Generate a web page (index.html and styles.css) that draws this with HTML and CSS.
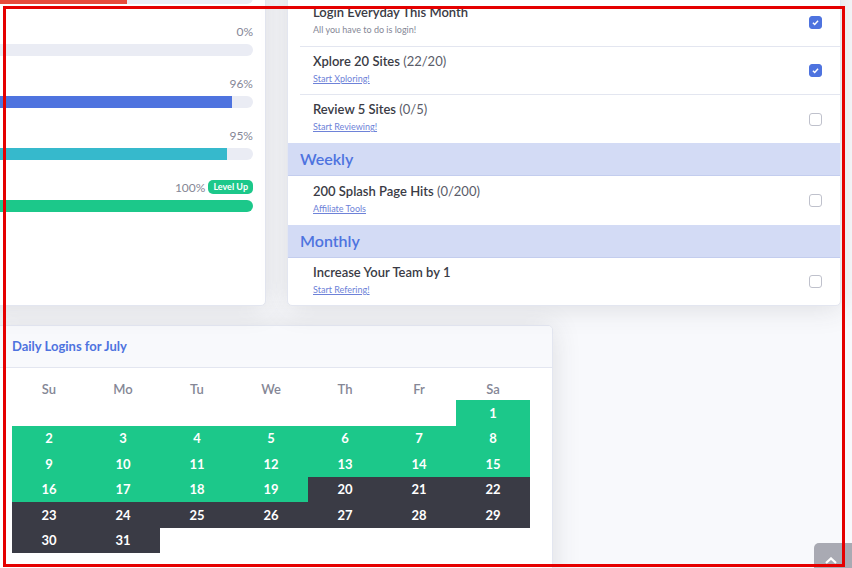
FILE: index.html
```html
<!DOCTYPE html>
<html lang="en">
<head>
    <meta charset="UTF-8">
    <meta name="viewport" content="width=device-width, initial-scale=1.0">
    <title>Dashboard Goals</title>
    <link rel="stylesheet" href="styles.css">
</head>
<body>

<div class="page">
    <div class="top-row">
        <div class="card goals">
            <div class="goal">
                <div class="goal-label">76%</div>
                <div class="bar"><div class="fill fill-red" style="width:76%"></div></div>
            </div>
            <div class="goal">
                <div class="goal-label">0%</div>
                <div class="bar"><div class="fill fill-blue" style="width:0%"></div></div>
            </div>
            <div class="goal">
                <div class="goal-label">96%</div>
                <div class="bar"><div class="fill fill-blue" style="width:96%"></div></div>
            </div>
            <div class="goal">
                <div class="goal-label">95%</div>
                <div class="bar"><div class="fill fill-teal" style="width:95%"></div></div>
            </div>
            <div class="goal">
                <div class="goal-label">100% <span class="badge">Level Up</span></div>
                <div class="bar"><div class="fill fill-green" style="width:100%"></div></div>
            </div>
        </div>

        <div class="card tasks">
            <div class="group-head">Daily</div>
            <div class="task">
                <div class="task-text">
                    <div class="task-title">Login Everyday This Month</div>
                    <div class="task-note">All you have to do is login!</div>
                </div>
                <span class="check checked"><svg viewBox="0 0 12 12"><path d="M3.2 6.2l1.9 1.9 3.7-4"/></svg></span>
            </div>
            <div class="task">
                <div class="task-text">
                    <div class="task-title">Xplore 20 Sites <span class="count">(22/20)</span></div>
                    <a class="task-link" href="#">Start Xploring!</a>
                </div>
                <span class="check checked"><svg viewBox="0 0 12 12"><path d="M3.2 6.2l1.9 1.9 3.7-4"/></svg></span>
            </div>
            <div class="task">
                <div class="task-text">
                    <div class="task-title">Review 5 Sites <span class="count">(0/5)</span></div>
                    <a class="task-link" href="#">Start Reviewing!</a>
                </div>
                <span class="check"></span>
            </div>

            <div class="group-head">Weekly</div>
            <div class="task">
                <div class="task-text">
                    <div class="task-title">200 Splash Page Hits <span class="count">(0/200)</span></div>
                    <a class="task-link" href="#">Affiliate Tools</a>
                </div>
                <span class="check"></span>
            </div>

            <div class="group-head">Monthly</div>
            <div class="task">
                <div class="task-text">
                    <div class="task-title">Increase Your Team by 1</div>
                    <a class="task-link" href="#">Start Refering!</a>
                </div>
                <span class="check"></span>
            </div>
        </div>
    </div>

    <div class="bottom-row">
        <div class="card calendar">
            <div class="card-head">Daily Logins for July</div>
            <div class="card-body">
                <table class="cal">
                    <thead>
                        <tr><th>Su</th><th>Mo</th><th>Tu</th><th>We</th><th>Th</th><th>Fr</th><th>Sa</th></tr>
                    </thead>
                    <tbody>
                        <tr><td></td><td></td><td></td><td></td><td></td><td></td><td class="on">1</td></tr>
                        <tr><td class="on">2</td><td class="on">3</td><td class="on">4</td><td class="on">5</td><td class="on">6</td><td class="on">7</td><td class="on">8</td></tr>
                        <tr><td class="on">9</td><td class="on">10</td><td class="on">11</td><td class="on">12</td><td class="on">13</td><td class="on">14</td><td class="on">15</td></tr>
                        <tr><td class="on">16</td><td class="on">17</td><td class="on">18</td><td class="on">19</td><td class="off">20</td><td class="off">21</td><td class="off">22</td></tr>
                        <tr><td class="off">23</td><td class="off">24</td><td class="off">25</td><td class="off">26</td><td class="off">27</td><td class="off">28</td><td class="off">29</td></tr>
                        <tr><td class="off">30</td><td class="off">31</td><td></td><td></td><td></td><td></td><td></td></tr>
                    </tbody>
                </table>
            </div>
        </div>
    </div>
</div>

<a class="scroll-top" href="#"><svg viewBox="0 0 12 7"><path d="M1 6l5-4.6 5 4.6"/></svg></a>
<div class="frame"></div>

</body>
</html>
```

FILE: styles.css
```css
body {
    margin: 0;
    height: 568px;
    overflow: hidden;
    background-color: #f8f9fc;
    font-family: Lato, "Open Sans", sans-serif;
    color: #5a5c69;
}
.page {
    margin: -36px 0 0 -274px;
}
.top-row {
    display: grid;
    grid-template-columns: 540px 554px;
    column-gap: 21px;
}
.card {
    box-sizing: border-box;
    background-color: #fff;
    border: 1px solid #e3e6f0;
    border-radius: 5px;
    box-shadow: 0 2px 28px rgba(58, 59, 69, 0.15);
    overflow: hidden;
}

/* progress column */
.goals {
    padding: 5px 12px 0 2px;
}
.goal {
    margin-bottom: 18px;
}
.goal-label {
    display: flex;
    justify-content: flex-end;
    align-items: center;
    gap: 3px;
    height: 18px;
    margin-bottom: 4px;
    font-size: 12px;
    color: #858796;
}
.badge {
    background-color: #1cc88a;
    color: #fff;
    font-size: 9px;
    font-weight: 700;
    line-height: 14px;
    padding: 0 5px;
    border-radius: 5px;
}
.bar {
    height: 12px;
    background-color: #eaecf4;
    border-radius: 6px;
    overflow: hidden;
}
.fill {
    height: 100%;
}
.fill-red { background-color: #e74a3b; }
.fill-blue { background-color: #4e73df; }
.fill-teal { background-color: #36b9cc; }
.fill-green { background-color: #1cc88a; }

/* task list */
.group-head {
    box-sizing: border-box;
    height: 33px;
    line-height: 32px;
    padding-left: 12px;
    background-color: #d3dbf5;
    border-bottom: 1px solid #c3cdee;
    color: #4e73df;
    font-size: 16px;
    font-weight: 600;
}
.task {
    box-sizing: border-box;
    display: flex;
    align-items: center;
    height: 48px;
    margin-left: 12px;
    padding: 0 18px 0 13px;
}
.task:has(+ .group-head) {
    height: 49px;
}
.task:last-child {
    height: 47px;
}
.task + .task {
    border-top: 1px solid #e3e6f0;
}
.task-text {
    flex: 1;
    padding-bottom: 4px;
}
.task-title {
    font-size: 13px;
    line-height: 16px;
    font-weight: 600;
    color: #3a3b45;
}
.count {
    font-weight: 400;
    color: #5a5c69;
}
.task-note,
.task-link {
    display: block;
    margin-top: 4px;
    font-size: 9px;
    line-height: 12px;
    color: #858796;
}
.task-link {
    color: #6e82d8;
    text-decoration: underline;
}
.check {
    box-sizing: border-box;
    width: 13px;
    height: 13px;
    border: 1px solid #bfc1cc;
    border-radius: 3px;
    background-color: #fff;
}
.check svg {
    display: block;
    width: 100%;
    height: 100%;
    fill: none;
    stroke: #fff;
    stroke-width: 1.6;
}
.check.checked {
    background-color: #4e73df;
    border-color: #4e73df;
}

/* calendar */
.bottom-row {
    padding: 19px 0 0 266px;
}
.calendar {
    width: 561px;
    height: 300px;
}
.card-head {
    box-sizing: border-box;
    height: 42px;
    line-height: 41px;
    padding-left: 19px;
    background-color: #f8f9fc;
    border-bottom: 1px solid #e3e6f0;
    color: #4e73df;
    font-size: 13px;
    font-weight: 700;
}
.card-body {
    padding: 10px 0 0 19px;
}
.cal {
    border-collapse: collapse;
    table-layout: fixed;
    width: 518px;
}
.cal th {
    height: 22px;
    padding: 0;
    font-size: 13px;
    font-weight: 600;
    color: #858796;
}
.cal td {
    height: 25.5px;
    padding: 0;
    text-align: center;
    font-size: 13px;
    font-weight: 700;
    color: #fff;
}
.cal td.on {
    background-color: #1cc88a;
}
.cal td.off {
    background-color: #3a3b45;
}

.scroll-top {
    position: fixed;
    left: 814px;
    top: 543px;
    width: 44px;
    height: 44px;
    border-radius: 5px;
    background-color: rgba(90, 92, 105, 0.5);
}
.scroll-top svg {
    position: absolute;
    left: 11px;
    top: 14px;
    width: 12px;
    height: 7px;
    fill: none;
    stroke: #fff;
    stroke-width: 2.2;
}
.frame {
    position: fixed;
    left: 3px;
    top: 6px;
    width: 842px;
    height: 561px;
    box-sizing: border-box;
    border: 3px solid #e50000;
    pointer-events: none;
}
```
